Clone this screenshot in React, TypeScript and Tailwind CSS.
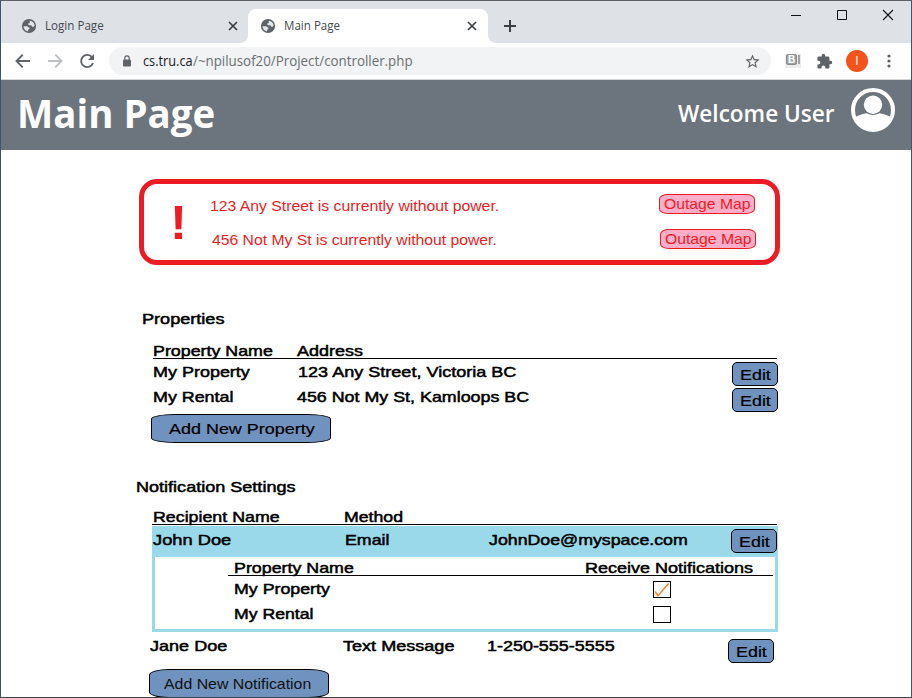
import { useLayoutEffect, useRef, useState } from "react";

type FitProps = { children: string; width: number; className?: string };

/** Single line of text stretched horizontally to a set width. */
function Fit({ children, width, className = "" }: FitProps) {
  const ref = useRef<HTMLSpanElement>(null);
  const [scale, setScale] = useState(1);
  useLayoutEffect(() => {
    if (ref.current) setScale(width / ref.current.offsetWidth);
  }, [width, children]);
  return (
    <span className={`block shrink-0 whitespace-nowrap ${className}`} style={{ width }}>
      <span ref={ref} className="inline-block origin-left align-top" style={{ transform: `scaleX(${scale})` }}>
        {children}
      </span>
    </span>
  );
}

function Label(props: FitProps) {
  return (
    <Fit
      {...props}
      className={`text-[15px] leading-5 text-black [-webkit-text-stroke:0.5px_black] ${props.className ?? ""}`}
    />
  );
}

function Globe() {
  return (
    <svg viewBox="0 0 16 16" className="size-4 shrink-0">
      <circle cx="8" cy="8" r="7.1" fill="#5f6368" />
      <path
        d="M8.800 2.700c2.600.3 4.600 2.300 4.900 4.900-.5.900-1.500 1.500-2.400 1.100-.5-.3-.3-1-.9-1.300-.8-.3-1.500 0-2.300-.2-.9-.3-1.100-.9-.7-1.600.4-.5 1.100-.3 1.400-.8.300-.7-.4-1.300 0-2.100z"
        fill="#e4e6e9"
      />
      <path
        d="M2.500 8.300h3.300c1.200.1 1.200 1 2.200 1.200.9.200.9 1.100.3 1.500-.6.400-1.100.5-1.200 1.200v1.200C4.400 13 2.600 10.900 2.500 8.300z"
        fill="#e4e6e9"
      />
    </svg>
  );
}

function TabClose() {
  return (
    <svg viewBox="0 0 10 10" className="size-[10px] shrink-0" fill="none" stroke="#3c4043" strokeWidth="1.7">
      <path d="M1 1l8 8M9 1L1 9" />
    </svg>
  );
}

function EditButton({ className = "" }: { className?: string }) {
  return (
    <button
      className={`flex h-6 w-[46px] shrink-0 items-start rounded-[5px] border border-black bg-[#7092be] pt-[2px] pl-[7px] text-left ${className}`}
    >
      <Fit width={31} className="text-[15px] leading-5 text-black [-webkit-text-stroke:0.2px_black]">Edit</Fit>
    </button>
  );
}

function OutageButton({ className = "" }: { className?: string }) {
  return (
    <button
      className={`flex h-5 w-24 shrink-0 border border-[#ed1c24] bg-[#ffaec9] pl-1 text-left [border-radius:9px/5px] ${className}`}
    >
      <Fit width={87} className="text-[15px] leading-[18px] text-[#ed1c24]">Outage Map</Fit>
    </button>
  );
}

function Checkbox({ checked = false }: { checked?: boolean }) {
  return (
    <span className="block h-[17px] w-[18px] shrink-0 border border-black bg-white">
      {checked && (
        <svg viewBox="0 0 16 15" className="h-[15px] w-4" fill="none" stroke="#ff7f27" strokeWidth="1.4">
          <path d="M1 9.500l3 4 1-.5 3-4L14.500 1.500" />
        </svg>
      )}
    </span>
  );
}

function BrowserChrome() {
  return (
    <div className="font-['Open_Sans','Noto_Sans',sans-serif]">
      <div className="flex h-[42px] bg-[#dee1e6]">
        <div className="flex h-[42px] w-[239px] items-center pt-[8px] pl-[20px]">
          <Globe />
          <Fit width={59} className="ml-2 text-[12px] leading-4 text-[#45494d]">Login Page</Fit>
          <span className="ml-[124px]"><TabClose /></span>
        </div>
        <div className="mt-auto h-2 w-2 bg-white">
          <div className="h-2 w-2 rounded-br-[8px] bg-[#dee1e6]" />
        </div>
        <div className="mt-2 flex h-[34px] w-[240px] items-center rounded-t-[8px] bg-white pl-3">
          <Globe />
          <Fit width={56} className="ml-2 text-[12px] leading-4 text-[#45494d]">Main Page</Fit>
          <span className="ml-[127px]"><TabClose /></span>
        </div>
        <div className="mt-auto h-2 w-2 bg-white">
          <div className="h-2 w-2 rounded-bl-[8px] bg-[#dee1e6]" />
        </div>
        <svg viewBox="0 0 12 12" className="mt-[19px] ml-[8px] size-3" stroke="#3c4043" strokeWidth="2">
          <path d="M6 0v12M0 6h12" />
        </svg>
        <svg viewBox="0 0 104 12" className="mt-[8px] ml-[275px] h-3 w-[104px]" fill="none" stroke="#111" strokeWidth="1">
          <path d="M0 6.500h10M46.500 1.500h9v9h-9z" />
          <path d="M92 1l10 10M102 1L92 11" strokeWidth="1.1" />
        </svg>
      </div>

      <div className="flex h-[37px] items-center border-b border-[#d3d5d8] bg-white">
        <svg viewBox="0 0 84 16" className="ml-[13px] h-4 w-[84px]" fill="none" strokeWidth="1.9">
          <path d="M16 8H3M8.700 1.700L2.500 8l6.200 6.300" stroke="#5f6368" />
          <path d="M34 8h13M41.300 1.700L47.500 8l-6.200 6.300" stroke="#bdbfc1" />
          <path d="M78 4.200A6.100 6.100 0 1 0 79 10" stroke="#5f6368" />
          <path d="M80 1v6h-6z" fill="#5f6368" />
        </svg>
        <div className="ml-[11px] flex h-7 w-[662px] items-center rounded-full bg-[#f1f3f4] pl-[13px]">
          <svg viewBox="0 0 10 12" className="h-3 w-[10px] shrink-0">
            <rect x="1" y="4.500" width="8" height="7" rx="1" fill="#5f6368" />
            <path d="M2.800 5V3a2.200 2.200 0 0 1 4.400 0v2" fill="none" stroke="#5f6368" strokeWidth="1.200" />
          </svg>
          <Fit width={50} className="ml-[11px] text-[14px] leading-5 text-[#202124]">cs.tru.ca</Fit>
          <Fit width={220} className="text-[14px] leading-5 text-[#6b6f73]">/~npilusof20/Project/controller.php</Fit>
          <svg viewBox="0 0 24 24" className="ml-[331px] size-[17px] shrink-0" fill="#5f6368">
            <path d="M22 9.240l-7.190-.62L12 2 9.190 8.630 2 9.240l5.460 4.730L5.820 21 12 17.270 18.180 21l-1.630-7.030L22 9.240zM12 15.400l-3.760 2.270 1-4.280-3.320-2.880 4.380-.38L12 6.100l1.710 4.040 4.380.38-3.320 2.880 1 4.280L12 15.400z" />
          </svg>
        </div>
        <div className="ml-[14px] flex h-[14px] w-4 items-start bg-[#ececec] pl-px">
          <div className="flex h-[11px] w-[11px] items-center justify-center rounded-[2px] border border-[#8c8c8c] bg-[#a3a3a3] font-['Liberation_Sans',sans-serif] text-[10px] font-bold leading-none text-white">
            B
          </div>
          <div className="mt-px ml-px h-[9px] w-[2px] bg-[#a3a3a3]" />
        </div>
        <svg viewBox="0 0 24 24" className="ml-[15px] size-[17px]" fill="#5f6368">
          <path d="M20.500 11H19V7c0-1.100-.9-2-2-2h-4V3.500a2.500 2.500 0 0 0-5 0V5H4c-1.100 0-1.990.9-1.990 2v3.800H3.500c1.490 0 2.700 1.210 2.700 2.700s-1.210 2.700-2.700 2.700H2V20c0 1.100.9 2 2 2h3.800v-1.500c0-1.490 1.210-2.700 2.700-2.700s2.700 1.210 2.700 2.700V22H17c1.100 0 2-.9 2-2v-4h1.500a2.500 2.500 0 0 0 0-5z" />
        </svg>
        <div className="ml-[13px] flex size-[22px] items-center justify-center rounded-full bg-[#f4541c] text-[12px] text-white">
          I
        </div>
        <svg viewBox="0 0 4 14" className="ml-[19px] h-[14px] w-1" fill="#5f6368">
          <circle cx="2" cy="2" r="1.600" />
          <circle cx="2" cy="7" r="1.600" />
          <circle cx="2" cy="12" r="1.600" />
        </svg>
      </div>
    </div>
  );
}

export default function App() {
  return (
    <div className="h-[698px] w-[912px] overflow-hidden border border-r-[#44546a] border-b-[#3b474f] border-l-[#3c5470] border-t-[#5c5f63] bg-white font-['Liberation_Sans',Arial,sans-serif]">
      <BrowserChrome />

      <header className="flex h-[70px] bg-[#6c757d] pl-[16px] font-['Open_Sans','Noto_Sans',sans-serif] font-bold text-white">
        <Fit width={198} className="mt-[7px] text-[39px] leading-[52px]">Main Page</Fit>
        <Fit width={157} className="mt-[17px] ml-[463px] text-[23px] leading-8 font-semibold">Welcome User</Fit>
        <svg viewBox="0 0 44 44" className="mt-[8px] ml-4 size-11 shrink-0">
          <circle cx="22" cy="22" r="20" fill="none" stroke="#fff" strokeWidth="4" />
          <circle cx="22" cy="16.800" r="9.200" fill="#fff" />
          <path d="M3.500 30Q8 26.300 15.500 25.300q6.500 3.500 13 0 7.500 1 12 4.700A20 20 0 0 1 3.500 30z" fill="#fff" />
        </svg>
      </header>

      <main className="h-[547px] overflow-hidden pt-[29px]">
        <section className="ml-[138px] flex h-[86px] w-[641px] rounded-[18px] border-[5px] border-[#ed1c24] text-[#ed1c24]">
          <Fit width={17} className="mt-[12px] ml-[26px] text-[48px] leading-[54px] font-bold">!</Fit>
          <div className="ml-[23px] pt-[12px]">
            <div className="flex">
              <Fit width={289} className="text-[15px] leading-5">123 Any Street is currently without power.</Fit>
              <OutageButton className="-mt-[2px] ml-[160px]" />
            </div>
            <div className="mt-[14px] flex pl-[2px]">
              <Fit width={285} className="text-[15px] leading-5">456 Not My St is currently without power.</Fit>
              <OutageButton className="-mt-px ml-[163px]" />
            </div>
          </div>
        </section>

        <section className="mt-[44px] ml-[141px]">
          <Label width={82}>Properties</Label>
          <div className="mt-[12px] ml-[11px] flex h-[18px] w-[624px] border-b border-black">
            <Label width={120}>Property Name</Label>
            <Label width={66} className="ml-[24px]">Address</Label>
          </div>
          <div className="ml-[11px] flex h-[26px] pt-[3px]">
            <Label width={97}>My Property</Label>
            <Label width={219} className="ml-[48px]">123 Any Street, Victoria BC</Label>
            <EditButton className="ml-[215px]" />
          </div>
          <div className="ml-[11px] flex h-[26px] pt-[2px]">
            <Label width={81}>My Rental</Label>
            <Label width={232} className="ml-[63px]">456 Not My St, Kamloops BC</Label>
            <EditButton className="mt-px ml-[203px]" />
          </div>
          <button className="mt-[3px] ml-[9px] flex h-[29px] w-[180px] border border-black bg-[#7092be] pt-[4px] pl-[17px] text-left [border-radius:24px/5px]">
            <Fit width={146} className="text-[15px] leading-5 text-black [-webkit-text-stroke:0.2px_black]">Add New Property</Fit>
          </button>
        </section>

        <section className="mt-[34px] ml-[135px]">
          <Label width={160}>Notification Settings</Label>
          <div className="mt-[10px] ml-[16px] flex h-[18px] w-[625px] border-b border-black">
            <Label width={127} className="ml-px">Recipient Name</Label>
            <Label width={59} className="ml-[64px]">Method</Label>
          </div>
          <div className="mt-px ml-[16px] w-[626px] border-[3px] border-t-0 border-[#99d9ea]">
            <div className="-mx-[3px] flex h-[31px] bg-[#99d9ea] pt-[3px] pl-px">
              <Label width={78} className="mt-px">John Doe</Label>
              <Label width={45} className="mt-px ml-[114px]">Email</Label>
              <Label width={199} className="mt-px ml-[99px]">JohnDoe@myspace.com</Label>
              <EditButton className="ml-[43px]" />
            </div>
            <div className="h-[72px] pt-px">
              <div className="ml-[73px] flex h-[18px] w-[545px] border-b border-black pl-[6px]">
                <Label width={120}>Property Name</Label>
                <Label width={168} className="ml-[231px]">Receive Notifications</Label>
              </div>
              <div className="ml-[79px] flex h-[25px] pt-[5px]">
                <Label width={96} className="-mt-[2px]">My Property</Label>
                <span className="ml-[323px]"><Checkbox checked /></span>
              </div>
              <div className="ml-[79px] flex h-[23px] pt-[5px]">
                <Label width={80} className="-mt-[2px]">My Rental</Label>
                <span className="ml-[339px]"><Checkbox /></span>
              </div>
            </div>
          </div>
          <div className="ml-[14px] flex h-[37px] pt-[4px]">
            <Label width={77}>Jane Doe</Label>
            <Label width={112} className="ml-[116px]">Text Message</Label>
            <Label width={128} className="ml-[32px]">1-250-555-5555</Label>
            <EditButton className="mt-[3px] ml-[113px]" />
          </div>
          <button className="ml-[13px] flex h-[29px] w-[180px] border border-black bg-[#7092be] pt-[4px] pl-[14px] text-left [border-radius:20px/6px]">
            <Fit width={147} className="text-[15px] leading-5 text-[#111]">Add New Notification</Fit>
          </button>
        </section>
      </main>
    </div>
  );
}
